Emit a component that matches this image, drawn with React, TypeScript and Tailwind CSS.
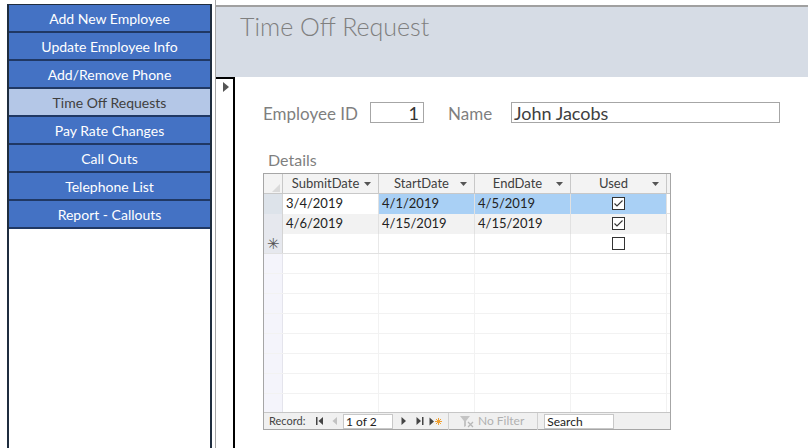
import React from 'react';

const navItems = [
  'Add New Employee',
  'Update Employee Info',
  'Add/Remove Phone',
  'Time Off Requests',
  'Pay Rate Changes',
  'Call Outs',
  'Telephone List',
  'Report - Callouts',
];

const rows = [
  { submit: '3/4/2019', start: '4/1/2019', end: '4/5/2019', used: true },
  { submit: '4/6/2019', start: '4/15/2019', end: '4/15/2019', used: true },
];

const cols = ['SubmitDate', 'StartDate', 'EndDate', 'Used'];

function Check({ checked }: { checked: boolean }) {
  return (
    <svg width="13" height="13" viewBox="0 0 13 13" className="block">
      <rect x="0.5" y="0.5" width="12" height="12" fill="white" stroke="#333" />
      {checked && <path d="M2.5 6.5 L5 9 L10.5 3.5" fill="none" stroke="#333" strokeWidth="1.1" />}
    </svg>
  );
}

function Caret() {
  return (
    <svg width="7" height="4" viewBox="0 0 7 4" className="block">
      <path d="M0 0 H7 L3.5 4 Z" fill="#555" />
    </svg>
  );
}

function Datasheet() {
  const gridCols = 'grid grid-cols-[19px_96px_96px_96px_96px]';
  return (
    <div className="w-[408px] h-[257px] border border-[#a6a6a6] flex flex-col bg-white">
      <div className="flex-1 overflow-hidden">
        {/* header */}
        <div className={`${gridCols} h-[20px] bg-[#f3f3f3] border-b border-[#c8c8c8] text-[13px] text-[#404040]`}>
          <div className="border-r border-[#c8c8c8] relative">
            <svg width="8" height="8" viewBox="0 0 8 8" className="absolute right-[2px] bottom-[2px]">
              <path d="M8 0 V8 H0 Z" fill="#dadada" />
            </svg>
          </div>
          {cols.map((c) => (
            <div key={c} className="border-r border-[#c8c8c8] flex items-center justify-center relative">
              <span className="pr-[10px]">{c}</span>
              <span className="absolute right-[7px] top-[8px]"><Caret /></span>
            </div>
          ))}
        </div>
        {/* data rows */}
        {rows.map((r, i) => {
          const sel = i === 0;
          const bg = sel ? 'bg-[#a9d0f5]' : 'bg-[#f2f2f2]';
          return (
            <div key={i} className={`${gridCols} h-[20px] border-b border-[#e1e1e1] text-[13px] text-[#222]`}>
              <div className={`border-r border-[#d4d4d4] ${sel ? 'bg-[#dde3ea]' : 'bg-[#e6e8ee]'}`} />
              <div className={`border-r border-[#e1e1e1] pl-[3px] flex items-center ${sel ? 'bg-white' : bg}`}>{r.submit}</div>
              <div className={`border-r border-[#e1e1e1] pl-[3px] flex items-center ${bg}`}>{r.start}</div>
              <div className={`border-r border-[#e1e1e1] pl-[3px] flex items-center ${bg}`}>{r.end}</div>
              <div className={`border-r border-[#e1e1e1] flex items-center justify-center ${bg}`}><Check checked={r.used} /></div>
            </div>
          );
        })}
        {/* new record row */}
        <div className={`${gridCols} h-[20px] border-b border-[#e1e1e1]`}>
          <div className="border-r border-[#d4d4d4] bg-[#e6e8ee] flex items-center justify-center text-[15px] text-[#555] leading-none">✳</div>
          <div className="border-r border-[#e8e8e8]" />
          <div className="border-r border-[#e8e8e8]" />
          <div className="border-r border-[#e8e8e8]" />
          <div className="border-r border-[#e8e8e8] flex items-center justify-center"><Check checked={false} /></div>
        </div>
        {/* empty area */}
        {Array.from({ length: 8 }).map((_, i) => (
          <div key={i} className={`${gridCols} h-[20px] border-b border-[#f2f2f2]`}>
            <div className="border-r border-[#e4e4ec] bg-[#f4f4fb]" />
            <div className="border-r border-[#f2f2f2]" />
            <div className="border-r border-[#f2f2f2]" />
            <div className="border-r border-[#f2f2f2]" />
            <div className="border-r border-[#f2f2f2]" />
          </div>
        ))}
      </div>
      {/* navigation bar */}
      <div className="h-[17px] bg-[#f0f0f0] border-t border-[#c6c6c6] flex items-center text-[11px] text-[#444] shrink-0">
        <span className="ml-[5px] w-[45px]">Record:</span>
        <svg width="8" height="8" viewBox="0 0 8 8" className="ml-[2px]">
          <rect x="0" y="0" width="1.5" height="8" fill="#444" />
          <path d="M7 0 V8 L2.5 4 Z" fill="#444" />
        </svg>
        <svg width="6" height="8" viewBox="0 0 6 8" className="ml-[8px]">
          <path d="M5 0 V8 L0.5 4 Z" fill="#c2c2c2" />
        </svg>
        <div className="ml-[5px] w-[50px] h-[15px] bg-white border border-[#c8c8c8] pl-[2px] text-[12px] text-[#222] leading-[13px]">1 of 2</div>
        <svg width="6" height="8" viewBox="0 0 6 8" className="ml-[8px]">
          <path d="M0.5 0 V8 L5 4 Z" fill="#444" />
        </svg>
        <svg width="8" height="8" viewBox="0 0 8 8" className="ml-[9px]">
          <path d="M0.5 0 V8 L5 4 Z" fill="#444" />
          <rect x="6" y="0" width="1.5" height="8" fill="#444" />
        </svg>
        <svg width="13" height="9" viewBox="0 0 13 9" className="ml-[5px]">
          <path d="M0.5 0.5 V8.5 L5 4.5 Z" fill="#444" />
          <path d="M9.5 1 V8 M6 4.5 H13 M7 2 L12 7 M12 2 L7 7" stroke="#f0a030" strokeWidth="1" />
        </svg>
        <div className="ml-[6px] h-[17px] border-l border-[#d0d0d0]" />
        <svg width="16" height="13" viewBox="0 0 16 13" className="ml-[10px]">
          <path d="M1 1 H11 L7 6 V11 L5 12 V6 Z" fill="#c4c4c4" />
          <path d="M9 7 L14 12 M14 7 L9 12" stroke="#b8b8b8" strokeWidth="1.3" />
        </svg>
        <span className="ml-[3px] text-[12px] text-[#b0b0b0]">No Filter</span>
        <div className="ml-[13px] h-[17px] border-l border-[#d0d0d0]" />
        <div className="ml-[6px] w-[70px] h-[15px] bg-white border border-[#c8c8c8] pl-[2px] text-[12px] text-[#222] leading-[13px]">Search</div>
      </div>
    </div>
  );
}

export default function App() {
  return (
    <div className="w-[808px] h-[448px] bg-white flex overflow-hidden font-['Lato',sans-serif]">
      {/* left nav */}
      <div className="pl-[7px] pt-[4px] w-[215px] shrink-0">
        <div className="w-[205px] h-[444px] border-x-2 border-t border-[#1f2d3f] bg-white">
          {navItems.map((item) => {
            const active = item === 'Time Off Requests';
            return (
              <div
                key={item}
                className={`h-[28px] border-b-2 border-[#203864] flex items-center justify-center text-[14px] ${
                  active ? 'bg-[#b4c7e7] text-[#404040]' : 'bg-[#4472c4] text-white'
                }`}
              >
                {item}
              </div>
            );
          })}
        </div>
      </div>
      {/* main form */}
      <div className="flex-1 flex flex-col pt-[5px] border-l border-[#a6a6a6]">
        <div className="h-[72px] bg-[#d6dce5] border-t-2 border-[#a0a0a0] pl-[24px] pt-[3px]">
          <h1 className="text-[25px] text-[#7f7f7f] font-light leading-[32px]">Time Off Request</h1>
        </div>
        <div className="flex-1 flex">
          <div className="w-[19px] border-r-2 border-t-2 border-black shrink-0 pt-[3px] pl-[7px]">
            <svg width="6" height="10" viewBox="0 0 6 10">
              <path d="M0 0 L6 5 L0 10 Z" fill="#555" />
            </svg>
          </div>
          <div className="flex-1 pl-[28px] pt-[25px]">
            <div className="flex items-center h-[21px]">
              <span className="text-[17px] text-[#7f7f7f] w-[107px] pt-[2px]">Employee ID</span>
              <div className="w-[54px] h-[21px] border border-[#a6a6a6] text-right pr-[4px] text-[18px] text-[#333] leading-[21px]">1</div>
              <span className="ml-[24px] text-[17px] text-[#7f7f7f] w-[63px] pt-[2px]">Name</span>
              <div className="w-[269px] h-[21px] border border-[#a6a6a6] pl-[2px] text-[18px] text-[#404040] leading-[21px]">John Jacobs</div>
            </div>
            <div className="mt-[27px] pl-[5px] text-[16px] text-[#7f7f7f] leading-[20px]">Details</div>
            <div className="mt-[3px]">
              <Datasheet />
            </div>
          </div>
        </div>
      </div>
    </div>
  );
}
